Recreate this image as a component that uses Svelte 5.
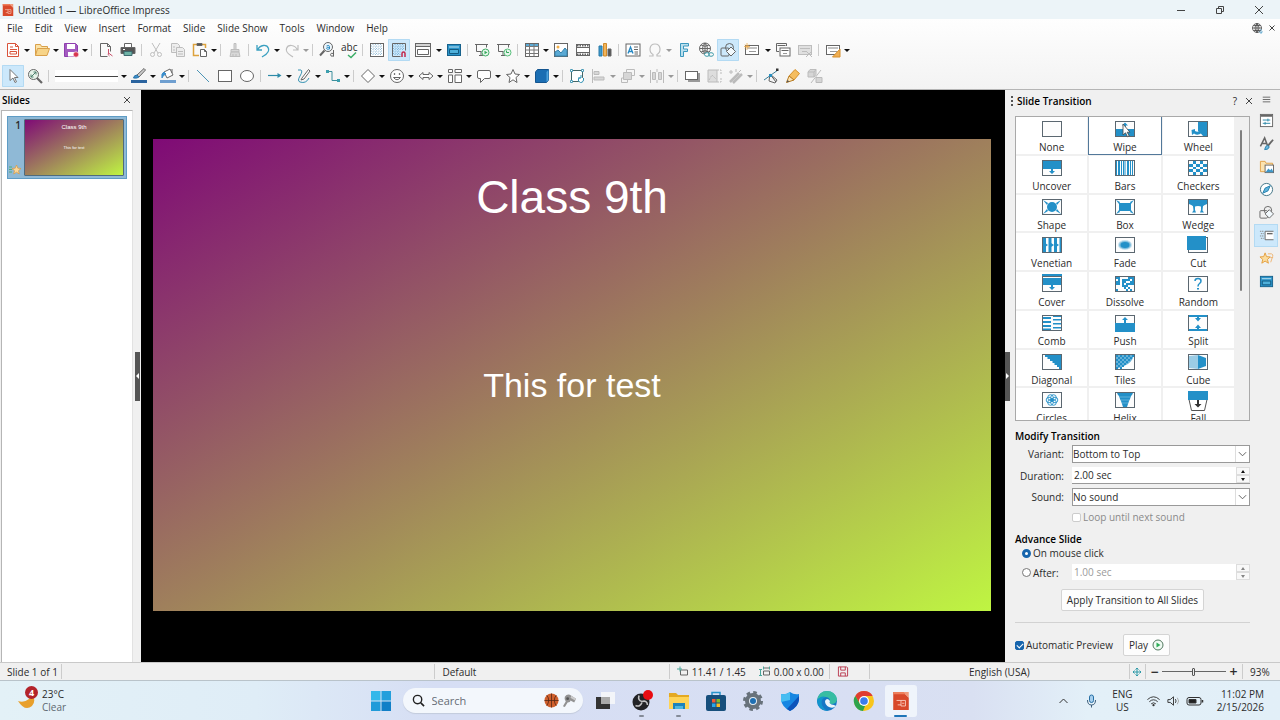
<script>
  // Toolbar entries: [icon, label, flags] where flags may hold
  // m = drop-down arrow, a = active, d = disabled, w = wide
  const standardBar = [
    ['new', 'New', 'm'], ['open', 'Open', 'm'], ['save', 'Save', 'm'], '|',
    ['pdf', 'Export as PDF'], ['print', 'Print'], '|',
    ['cut', 'Cut', 'd'], ['copy', 'Copy', 'd'], ['paste', 'Paste', 'm'], '|',
    ['brush', 'Clone Formatting', 'd'], '|',
    ['undo', 'Undo', 'm'], ['redo', 'Redo', 'md'], '|',
    ['find', 'Find and Replace'], ['spell', 'Spelling'], '|',
    ['grid', 'Display Grid'], ['snap', 'Snap to Grid', 'a'], ['views', 'Display Views', 'mw'],
    ['master', 'Master Slide'], '|',
    ['present', 'Start from First Slide'], ['presentNow', 'Start from Current Slide'], '|',
    ['table', 'Table', 'm'], ['image', 'Insert Image'], ['film', 'Insert Media'], ['chart', 'Insert Chart'], '|',
    ['textbox', 'Insert Text Box'], ['omega', 'Special Characters', 'md'], ['fontwork', 'Fontwork'],
    ['link', 'Hyperlink'], ['shapes', 'Show Draw Functions', 'a'],
    ['newSlide', 'New Slide', 'mw'], ['dupSlide', 'Duplicate Slide'], ['delSlide', 'Delete Slide', 'd'], '|',
    ['layout', 'Slide Layout', 'm']
  ]

  const drawingBar = [
    ['pointer', 'Select', 'a'], ['zoom', 'Zoom & Pan'], '|', 'line',
    ['lineColor', 'Line Color', 'm'], ['fillColor', 'Fill Color', 'm'], '|',
    ['lineTool', 'Insert Line'], ['rect', 'Rectangle'], ['ellipse', 'Ellipse'], '|',
    ['arrow', 'Lines and Arrows', 'm'], ['curve', 'Curves and Polygons', 'm'], ['connector', 'Connectors', 'm'], '|',
    ['diamond', 'Basic Shapes', 'm'], ['smiley', 'Symbol Shapes', 'm'], ['doubleArrow', 'Block Arrows', 'm'],
    ['flow', 'Flowchart', 'm'], ['callout', 'Callouts', 'm'], ['star', 'Stars and Banners', 'm'],
    ['cube', '3D Objects', 'm'], '|',
    ['rotate', 'Rotate'], ['align', 'Align', 'md'], ['arrange', 'Arrange', 'md'], ['distribute', 'Distribute', 'md'], '|',
    ['shadow', 'Shadow'], ['crop', 'Crop', 'd'], ['filter', 'Filter', 'md'], '|',
    ['points', 'Edit Points'], ['glue', 'Gluepoints'], ['extrude', 'Toggle Extrusion', 'd']
  ]

  const monitor = '<path d="M1 2.500h13M2.500 2.500v7h5M12.500 2.500v3M5 13.500h4M7 9.500v4"/>'
  const winIcon = '<rect x="1.500" y="3.500" width="13" height="9" fill="#fff"/><path d="M3 6h10" stroke="#888"/><path d="M5 9.500h7" stroke="#999"/>'

  const icons = {
    new: '<path d="M2.500 1.500h8l3 3v10h-11z" fill="#fff" stroke="#d9533a"/><path d="M10.500 1.500v3h3" stroke="#d9533a"/><path d="M5 5h3M5 7.500h7M5 12h6.500V9.500H5z" stroke="#d9533a"/>',
    open: '<path d="M1.500 13.500v-11h5l1 2h6v2" fill="#fbe3a7" stroke="#d9a04a"/><path d="M1.500 13.500l2-7h12l-2.500 7z" fill="#f7d488" stroke="#d9a04a"/>',
    save: '<path d="M1.500 1.500h11l2 2v11h-13z" fill="#a35bc0" stroke="#8e3eae"/><path d="M4 2h8v5H4zM5 10h6v4.500H5z" fill="#fff" stroke="none"/><circle cx="13" cy="12.500" r="2.700" fill="#d83650" stroke="#fff" stroke-width=".6"/>',
    pdf: '<path d="M9.500 14.500h-7v-13h7l3 3v5M9.500 1.500v3h3"/><path d="M10.500 7v4c-1 2 1 3 1 3M10.500 11l4 3" stroke="#c9506b"/>',
    print: '<path d="M4.500 5v-3.500h7V5" fill="#fff"/><path d="M1 5.500h14v6H1z" fill="#555"/><path d="M4 9.500h8v4H4z" fill="#6fb3a6" stroke="#3d6b70"/><path d="M3 7.500h2" stroke="#fff"/>',
    cut: '<path d="M4 1l6 10M12 1L6 11"/><circle cx="4.500" cy="12.500" r="2"/><circle cx="11.500" cy="12.500" r="2"/>',
    copy: '<path d="M1.500 1.500h6l2 2v7h-8z" fill="#ddd"/><path d="M6.500 5.500h6l2 2v7h-8z" fill="#ddd"/><path d="M8 9.500h5M8 12h5M3 5h2M3 8h2"/>',
    paste: '<path d="M5 2.500H1.500v11H7M10 2.500h3.500V6" stroke="#dda23c" stroke-width="1.500"/><path d="M5 1.500h5v2H5z" fill="#555"/><path d="M8.500 7.500h4l2 2v5h-6z" fill="#fff"/><path d="M12.500 7.500v2h2"/>',
    brush: '<path d="M7 1.500h2v6H7zM4 7.500h8v2.500H4z" fill="#aaa"/><path d="M4 10l-1 4.500h10L12 10zM6 12v2M9 12v2" fill="#aaa"/>',
    undo: '<path d="M2 3v5h5M2.500 8C5 2.500 12 2 13.500 6.500S10 13 7 15" stroke="#3aa0c0" stroke-width="1.300"/>',
    redo: '<path d="M14 3v5H9M13.500 8C11 2.500 4 2 2.500 6.500S6 13 9 15" stroke-width="1.200"/>',
    find: '<circle cx="9" cy="5" r="4.500" fill="#eef6fb"/><path d="M5.500 8.500L1 13.500" stroke-width="2"/><path d="M7.500 4q3-1.500 3 .5v2.500q-3 .8-3-.7t3-1" stroke="#2a8cc4"/><path d="M14.500 8v6.500M14.500 11.500q-3-1-3 1.200t3 1.300"/>',
    grid: '<rect x="1.500" y="1.500" width="13" height="13" fill="#fff"/><path d="M4 2v12M6.500 2v12M9 2v12M11.500 2v12M2 4h12M2 6.500h12M2 9h12M2 11.500h12" stroke="#6aa5c9" stroke-width=".7" stroke-dasharray="1 1.500"/>',
    snap: '<path d="M9.500 14.500h-8v-13h13v7"/><path d="M4 2v12M6.500 2v12M9 2v12M11.500 2v6M2 4h12M2 6.500h12M2 9h7M2 11.500h7" stroke="#5a9cc9" stroke-width=".7" stroke-dasharray="1 1.500"/><path d="M11 15v-3.500q0-1.500 1.500-1.500t1.500 1.500V15" stroke="#c2294c" stroke-width="1.500"/>',
    views: '<rect x=".5" y="1.500" width="15" height="13" fill="#fff"/><path d="M.5 4.500h15M2.500 7.500h11v5h-11z"/><path d="M1 3h14" stroke="#aaa"/>',
    master: '<rect x="1.500" y="2.500" width="13" height="11" fill="#2a93c9" stroke="#17618b"/><path d="M3.500 7.500h9v4h-9z" fill="#4fb0da" stroke="#125a80"/><path d="M3 5h10" stroke="#bfe3f2"/>',
    present: monitor + '<circle cx="11.500" cy="10.500" r="3.500" fill="#e8f8ee" stroke="#42ad66"/><path d="M10.500 8.800v3.400l3-1.700z" fill="#35a85a" stroke="none"/>',
    presentNow: monitor + '<circle cx="11.500" cy="10.500" r="3.500" fill="#e8f8ee" stroke="#5abf7c"/><path d="M10.500 8.500v2h2.500" stroke="#35a85a"/>',
    table: '<rect x="1.500" y="1.500" width="13" height="13" fill="#fff"/><path d="M2 3h12" stroke="#5cabd6" stroke-width="2"/><path d="M1.500 4.500h13M1.500 8h13M1.500 11.500h13M5.500 2v12.500M10 2v12.500" stroke="#777"/>',
    image: '<rect x="1.500" y="1.500" width="13" height="13" fill="#fff"/><path d="M2 14v-4l3-2 3 3 4-5 2 2.500V14z" fill="#5aa9d4" stroke="#3382ad"/><circle cx="5" cy="5" r="1.500" fill="#f2b04a" stroke="none"/>',
    film: '<rect x="1.500" y="2.500" width="13" height="11" fill="#fff"/><path d="M2 3.500h12M2 12.500h12" stroke-width="2" stroke-dasharray="1.500 1"/><path d="M2 5.500h12M2 10.500h12"/>',
    chart: '<path d="M2 4h3v10H2z" fill="#3c9bd0" stroke="#2878a5"/><path d="M6.500 1.500h3v12.500h-3z" fill="#f2b45a" stroke="#d18b2b"/><path d="M11 7h3v7h-3z" fill="#555"/>',
    textbox: '<rect x="1" y="2" width="14" height="12" fill="#fff"/><path d="M3 11.500L5.500 5 8 11.500M4 9.500h3" stroke="#2588c4" stroke-width="1.300"/><path d="M9 5h4M9 7.500h4M9.500 10h3.500M9.500 12h3.500"/>',
    omega: '<path d="M2 14h4v-1.500C1.500 10 2 2 8 2s6.500 8 2 10.500V14h4" stroke-width="1.200"/>',
    fontwork: '<path d="M4.500 14.500v-13h8v2.500H7.500v3h4v2.500h-4v5z" fill="#bce0ee" stroke="#3b97bd"/>',
    link: '<circle cx="7" cy="6.500" r="5.500"/><path d="M1.500 6.500h11M7 1v11M3 3q4 2.500 8 0M3 10q4-2.500 8 0M7 1Q2 6.500 7 12M7 1q5 5.500 0 11"/><ellipse cx="9" cy="12.500" rx="2.500" ry="1.800" stroke="#3d9aa8" fill="#fff"/><ellipse cx="13" cy="12.500" rx="2.500" ry="1.800" stroke="#3d9aa8"/>',
    shapes: '<rect x="1" y="6" width="8" height="8" rx="1"/><circle cx="9.500" cy="5.500" r="4"/><path d="M11 5l4.500 4.500L11 14 6.500 9.500z" fill="#f2f9fd"/>',
    newSlide: winIcon + '<path d="M3 1v7M0 4.500h6M1 2.500l4 4M5 2.500l-4 4" stroke="#efac4d" stroke-width=".8"/>',
    dupSlide: '<path d="M4 9.500H1.500v-8h10V4"/><path d="M2.500 3.500h8"/><rect x="5" y="6" width="10" height="8" fill="#fff"/><path d="M6.500 8.500h7"/><path d="M8 11.500h4" stroke="#999"/>',
    delSlide: '<rect x="1.500" y="3.500" width="13" height="9" fill="#bbb"/><path d="M3 6.500h10M5 9.500h5"/><path d="M9 9l6 6M15 9l-6 6"/>',
    layout: winIcon + '<path d="M15 7v8H7.500z" fill="#f0ae52" stroke="#d6902f"/>',
    pointer: '<path d="M5 1.500v11l3-2.500 2 4.500 1.500-.7-2-4.300h3.500z" fill="#fff" stroke="#777"/>',
    zoom: '<circle cx="6.500" cy="6.500" r="5" fill="#e7f3ea"/><path d="M10 10l5 5" stroke-width="2.200"/><path d="M4 9l5-5M4 6.500V9h2.500M9 6.500V4H6.500" stroke="#4c7e6c"/>',
    lineColor: '<path d="M6 7l7-6.500L14.500 2 8 9" fill="#ccc"/><path d="M6 7q-3 0-3.500 3 4 .5 5.500-1z" fill="#3d8ecb" stroke="#2b74a8"/><path d="M0 13.500h16" stroke="#2b649f" stroke-width="3"/>',
    fillColor: '<path d="M4 4l6-3 3 6-6 3z" fill="#fff"/><path d="M4 4q-3 1-2 6 1-3 4-4z" fill="#3d8ecb" stroke="#3d8ecb"/><path d="M12 1v4"/><path d="M0 13.500h16" stroke="#6f9fd0" stroke-width="3"/>',
    lineTool: '<path d="M2 2l12 12" stroke="#4b94b5"/>',
    rect: '<rect x="1.500" y="2.500" width="13" height="11" fill="#fff"/>',
    ellipse: '<ellipse cx="8" cy="8" rx="6.500" ry="5.500" fill="#fff"/>',
    arrow: '<path d="M1 7.500h12" stroke="#2c8aa8" stroke-width="1.200"/><path d="M10.500 5l4 2.500-4 2.500z" fill="#2c8aa8" stroke="none"/>',
    curve: '<path d="M2 2h3q2 1-1 6t0 6q6 2 9-4" stroke="#3693b3"/><path d="M6 10l6.500-8.500L14 3 8 11l-3 1z" fill="#fff"/>',
    connector: '<path d="M3 3.500h4v9h6" stroke="#3c8f9c"/><path d="M1 2h3v3H1zM12 11h3v3h-3z" fill="#3c9fae" stroke="none"/>',
    diamond: '<path d="M8 1.500L14.500 8 8 14.500 1.500 8z" fill="#fff"/>',
    smiley: '<circle cx="8" cy="8" r="6.500" fill="#fff"/><path d="M4.500 9.500q3.500 4.500 7 0z"/><circle cx="5.500" cy="6" r=".5" fill="#555"/><circle cx="10.500" cy="6" r=".5" fill="#555"/>',
    doubleArrow: '<path d="M1 8l4-3.500v2h6v-2L15 8l-4 3.500v-2H5v2z" fill="#fff"/>',
    flow: '<path d="M1.500 1.500h4v3h-4zM8 1.500h6.500v3H8zM1.500 7h4v7.500h-4zM8 7h6.500v7.500H8z" fill="#fff"/>',
    callout: '<path d="M3 2.500h10q1.500 0 1.500 1.500v5q0 1.500-1.500 1.500H8.500l-4 4v-4H3Q1.500 10.500 1.500 9V4Q1.500 2.500 3 2.500z" fill="#fff"/>',
    star: '<path d="M8 1.500l2 4.500 4.500.5-3.500 3 1 5-4-2.700-4 2.700 1-5-3.500-3L6 6z" fill="#fff"/>',
    cube: '<path d="M1.500 4l2-2.500h11v10.500l-2 2.500h-11z" fill="#1b6eb3" stroke="#14558f"/><path d="M12.500 4l2-2v10l-2 2z" fill="#4da3de" stroke="none"/>',
    rotate: '<rect x="2.500" y="2.500" width="11" height="11" stroke="#466" fill="#fff"/><path d="M1.500 1.500h2v2h-2zM12.500 1.500h2v2h-2zM1.500 12.500h2v2h-2z" fill="#fff" stroke="#4a9cb8"/><path d="M14.500 10q.5 4.500-3 4.500-3-1-2-4l2-1M12 7v3H9" stroke="#2f92b5" fill="#fff"/>',
    align: '<path d="M1.500 1v14"/><path d="M3 3.500h5v3H3zM3 9h10v3H3z" fill="#aaa"/>',
    arrange: '<path d="M6.500 1.500h8v6h-8zM1.500 10h6v4.500h-6z"/><path d="M3.500 4.500h8v7h-8z" fill="#aaa"/>',
    distribute: '<path d="M1.500 2v13M8 1v3M8 12v3M14.500 2v13"/><path d="M3.500 4.500h3v7h-3zM9.500 4.500h3v7h-3z" fill="#aaa"/>',
    shadow: '<path d="M4 13h11V5" stroke="#999" stroke-width="2"/><rect x="1.500" y="3.500" width="12" height="8" fill="#fff"/>',
    crop: '<path d="M2 2h9v12H2z" fill="#bbb"/><path d="M3 12l3-5 4 4M11 2h4v4M15 10v4h-4" stroke-dasharray="2 1"/>',
    filter: '<path d="M2 14l9-9M5 15l9-9" stroke-width="2.500"/><path d="M3 2v4M1 4h4M8 1v3M13 2l-2 2"/>',
    points: '<path d="M1 12L15 2" stroke="#3b7e98"/><path d="M7 6l-1 7 6 2 2-3z"/><path d="M7 6l6 8" stroke="#555"/><path d="M6 6h3v3H6z" fill="#288fc0" stroke="none"/><path d="M13 .5h2.500V3H13z" fill="#333" stroke="none"/>',
    glue: '<path d="M4 8l6-6.500 4.500 4L9 12z" fill="#f5bd5f" stroke="#d6912b"/><path d="M4 8l-2.500 6.500L9 12z" fill="#fce3b3" stroke="#b77b22"/><path d="M1.500 14.500l1-2.500 2 1.500z" fill="#555" stroke="none"/>',
    extrude: '<path d="M1 4l2-2.500h6v5L7 9H1z" fill="#aaa"/><path d="M1 4h6v5M7 4l2-2.500M14 2L4 15"/><path d="M9 9.500h6v5H9z" fill="#aaa"/>',
    // sidebar decks
    burger: '<path d="M4 5.500h8M4 8h8M4 10.500h8"/>',
    properties: '<rect x="1.500" y="1.500" width="13" height="13" fill="#fff"/><path d="M2 3h12" stroke-width="2"/><path d="M4 7.500h8M4 11h8M9.500 6v3M6.500 9.500v3" stroke="#2b88a8"/>',
    styles: '<path d="M1.500 11L6 2l3 8M3 8h5" stroke-width="1.600"/><path d="M15 4L9 11" stroke-width="2"/><path d="M9 10q-2 0-3 4.500 4 .5 5-3z" fill="#6db8de" stroke="#2a83b0"/>',
    gallery: '<path d="M1.500 13.500v-11h5l1 2h7v9z" fill="#fbe3b0" stroke="#e0a149"/><rect x="6.500" y="6.500" width="9" height="8" fill="#fff"/><path d="M7 14l3-4 2 2 1.500-2 2 4z" fill="#3d97c9" stroke="none"/>',
    navigator: '<circle cx="8" cy="8" r="6.500" fill="#fff" stroke="#3e7183"/><path d="M12 4l-2.500 5.500L4 12l2.500-5.500z" fill="#61b4dc" stroke="#2480ad"/>',
    transition: '<path d="M15.500 3.500h-9v9h9" fill="#fff"/><path d="M8.500 6h6" stroke-width="1.500"/><path d="M1 3.500h4M2 6h3M1 8.500h4M2 11h3" stroke="#8a8a8a" stroke-dasharray="1.500 .7"/>',
    animation: '<path d="M6.500 2l1.500 4 4 .3-3 2.700 1 4-3.500-2.200L3 13l1-4L1 6.300l4-.3z" fill="#fbdc9e" stroke="#e39f3e"/><path d="M9.500 3h4q2 1 1 3l-2 6M12 7h3" stroke="#eeb472"/>'
  }

  const decks = ['properties', 'styles', 'gallery', 'navigator', 'shapes', 'transition', 'animation', 'master']

  // Fills every cell of a cols x rows raster for which test() holds
  function cells(cols, rows, test) {
    const w = 18 / cols
    const h = 14 / rows
    let d = ''
    for (let r = 0; r < rows; r++) {
      for (let c = 0; c < cols; c++) {
        if (test(c, r)) d += `M${1 + c * w} ${1 + r * h}h${w}v${h}h${-w}z`
      }
    }
    return `<path shape-rendering="crispEdges" d="${d}"/>`
  }

  const transitions = [
    ['None', ''],
    ['Wipe', '<path d="M1 8h18v7H1zM10 1.500l3 3h-2V8H9V4.500H7z"/><path d="M8 3v11l2.500-2.200 2 4 1.700-.8-2-3.800H15z" fill="#fff" stroke="#444" stroke-width=".8"/>'],
    ['Wheel', '<path d="M10 1h9v14h-4q-2-3-5-5z"/><path d="M3.500 9l3.500-1v2q3 2 6-1l1.500 2q-4 4.500-8.500 1.500L4 14z"/>'],
    ['Uncover', '<path d="M1 1h18v8H1zM9 9h2v2h2l-3 3-3-3h2z"/>'],
    ['Bars', '<path d="M1 1h1v14H1zM3 1h2v14H3zM6 1h1v14H6zM8 1h1.500v14H8zM10.500 1H11v14h-.5zM12 1h2v14h-2zM15 1h1v14h-1zM17 1h1v14h-1z"/>'],
    ['Checkers', cells(5, 5, (c, r) => (c + r) % 2 === 1)],
    ['Shape', '<circle cx="10" cy="8" r="5"/><path d="M1 1l5 3-1 2zM19 1l-5 3 1 2zM1 15l5-3-1-2zM19 15l-5-3 1-2z"/>'],
    ['Box', '<path d="M4 4h12v8H4z"/><path d="M1 1l4 2-1 2zM19 1l-4 2 1 2zM1 15l4-2-1-2zM19 15l-4-2 1-2z"/>'],
    ['Wedge', '<path d="M1 1h18v4q-3 1-5 3-4-2-8 0-2-2-5-3z"/><path d="M5 7h2v4l1 2.500H4l1.500-2zM15 7h-2v4l-1 2.500h4l-1.500-2z"/>'],
    ['Venetian', '<path d="M1 1h3v14H1zM6.500 1h3v14h-3zM12 1h3v14h-3zM17.500 1H19v14h-1.500z"/><path d="M3 6l3 2-3 2zM9 6l3 2-3 2zM14 6l3 2-3 2z"/>'],
    ['Fade', '<ellipse cx="10" cy="8" rx="7" ry="5" opacity=".25"/><ellipse cx="10" cy="8" rx="6" ry="4" opacity=".45"/><ellipse cx="10" cy="8" rx="4.500" ry="3"/>'],
    ['Cut', '<path d="M-1-1h19v14H-1z"/>'],
    ['Cover', '<path d="M0-2h20v2H0zM1 2h18v7H1zM9 9h2v2h2l-3 3-3-3h2z"/>'],
    ['Dissolve', cells(9, 7, (c, r) => (c * c * 3 + r * 5 + c * r) % 7 < 4)],
    ['Random', '<path d="M7 5q0-2.500 3-2.500t3 2.500q0 1.500-1.500 2.500T10 10.500" fill="none" stroke="#2390c8" stroke-width="1.500"/><path d="M9 12h2v1.500H9z"/>'],
    ['Comb', '<path d="M1 2h8v2H1zM1 6h8v2H1zM1 10h8v2H1zM1 13.500h8V15H1zM11 1h8v1h-8zM11 4h8v1.500h-8zM11 8h8v1.500h-8zM11 12h8v1.500h-8z"/>'],
    ['Push', '<path d="M0 8h20v9H0zM10 2l3 3h-2v3H9V5H7z"/>'],
    ['Split', '<path d="M1 0h18v2H1zM1 14h18v2H1zM9 2h2v1h2l-3 3.500L7 3h2zM9 14h2v-1h2l-3-3.500L7 13h2z"/>'],
    ['Diagonal', '<path d="M3 1h16v14h-2v-2h-2v-2h-2.500V9h-2V7H8V5H5.500V3H3z"/>'],
    ['Tiles', '<path d="M1 1h18q-2 8-10 11l-8 3z" opacity=".7"/>' + cells(9, 7, (c, r) => (c + r) % 2 === 0 && c + r < 9)],
    ['Cube', '<path d="M1 2l9-1v14l-9-1z" opacity=".45"/><path d="M10 1l8 3v8l-8 3z"/>'],
    ['Circles', '<g fill="none" stroke="#2390c8" stroke-width=".9"><circle cx="10" cy="8" r="1.500"/><circle cx="7" cy="8" r="2.800"/><circle cx="13" cy="8" r="2.800"/><circle cx="8.500" cy="5.500" r="2.800"/><circle cx="11.500" cy="5.500" r="2.800"/><circle cx="8.500" cy="10.500" r="2.800"/><circle cx="11.500" cy="10.500" r="2.800"/></g>'],
    ['Helix', '<path d="M2 1h16l-1 2-1 1-1 3-1 2-1 3-1 3H8l-1-3-1-3-1-2-1-3-1-1z"/><path d="M5 5h10M6 8h8M7 11h6" stroke="#8cc7e4" stroke-width=".6"/>'],
    ['Fall', '']
  ]

  const menus = ['File', 'Edit', 'View', 'Insert', 'Format', 'Slide', 'Slide Show', 'Tools', 'Window', 'Help']

  let selected = $state('Wipe')
  let variant = $state('Bottom to Top')
  let sound = $state('No sound')
  let duration = $state('2.00 sec')
  let after = $state('1.00 sec')
  let advance = $state('click')
  let zoom = $state(50)
</script>

{#snippet icon(name)}
  <svg class="icon" viewBox="0 0 16 16" aria-hidden="true">{@html icons[name]}</svg>
{/snippet}

{#snippet appIcon()}
  <svg viewBox="0 0 16 18" aria-hidden="true">
    <path d="M1 1h9l5 5v11H1z" fill="#d8492b" />
    <path d="M10 1l5 5V1z" fill="#f09a7c" />
    <path d="M1 1h9l2 2H1z" fill="#ee7f5c" />
    <path d="M4 8.500h4M5 12.500h3M8 8.500h4v5H8zM9 11h2" fill="none" stroke="#fbd0c2" stroke-width=".8" />
  </svg>
{/snippet}

{#snippet toolbar(items, label)}
  <div class="toolbar" role="toolbar" aria-label={label}>
    {#each items as item}
      {#if item === '|'}
        <span class="sep"></span>
      {:else if item === 'line'}
        <button class="tool line-style" aria-label="Line Style"><span class="line-sample"></span><i class="caret"></i></button>
      {:else}
        {@const flags = item[2] ?? ''}
        <button
          class="tool"
          class:menu={flags.includes('m')}
          class:active={flags.includes('a')}
          class:wide={flags.includes('w')}
          disabled={flags.includes('d')}
          aria-label={item[1]}
        >
          {#if item[0] === 'spell'}
            <span class="abc">abc<svg viewBox="0 0 10 6"><path d="M1 3l3 2.500L9 .5" fill="none" stroke="#3cae68" stroke-width="1.500" /></svg></span>
          {:else}
            {@render icon(item[0])}
          {/if}
          {#if flags.includes('m')}<i class="caret"></i>{/if}
        </button>
      {/if}
    {/each}
  </div>
{/snippet}

<div class="app">
  <header class="titlebar">
    <span class="app-logo">{@render appIcon()}</span>
    <span class="title">Untitled 1 — LibreOffice Impress</span>
    <button aria-label="Minimize"><svg viewBox="0 0 10 10"><path d="M1 5.500h8" /></svg></button>
    <button aria-label="Restore"><svg viewBox="0 0 10 10"><path d="M1.500 3.500h5v5h-5zM3.500 3V1.500h5v5H7" /></svg></button>
    <button aria-label="Close"><svg viewBox="0 0 10 10"><path d="M1 1l8 8M9 1L1 9" /></svg></button>
  </header>

  <div class="bars">
    <nav class="menubar">
      {#each menus as menu}
        <button>{menu}</button>
      {/each}
      <span class="doc-buttons">
        <svg class="globe" viewBox="0 0 12 12"><circle cx="6" cy="6" r="4.500" /><path d="M1.500 6h9M6 1.500v9M6 1.500q-4 4.500 0 9M6 1.500q4 4.500 0 9M2.500 3.500h7M2.500 8.500h7" /><path d="M10 7v4M8 9.500l2 2 1.500-2" stroke="#4a9bc6" /></svg>
        <button aria-label="Close Document"><svg viewBox="0 0 10 10"><path d="M2.500 2.500l5 5M7.500 2.500l-5 5" /></svg></button>
      </span>
    </nav>
    {@render toolbar(standardBar, 'Standard')}
    {@render toolbar(drawingBar, 'Drawing')}
  </div>

  <main class="workspace">
    <aside class="slides">
      <div class="pane-title">
        <h2>Slides</h2>
        <button aria-label="Close Pane"><svg viewBox="0 0 10 10"><path d="M2 2l6 6M8 2l-6 6" /></svg></button>
      </div>
      <div class="slide-list">
        <button class="thumb" aria-label="Slide 1">
          <span class="thumb-side">
            <b>1</b>
            <svg viewBox="0 0 12 10"><path d="M0 2h3M0 4.500h3M0 7h3" stroke="#4fae7c" /><path d="M7.500 0l1.300 3.200 3.200.3-2.500 2.200.8 3.300-2.800-1.800L4.700 9l.8-3.300L3 3.500l3.200-.3z" fill="#fbd79a" stroke="#d99a41" stroke-width=".7" /></svg>
          </span>
          <span class="mini slide-fill">
            <span class="mini-title">Class 9th</span>
            <span class="mini-body">This for test</span>
          </span>
        </button>
      </div>
    </aside>
    <div class="splitter"><button class="grip" aria-label="Hide Slides"><svg viewBox="0 0 5 6"><path d="M4 0v6L1 3z" /></svg></button></div>

    <section class="canvas">
      <div class="slide slide-fill">
        <h1>Class 9th</h1>
        <p>This for test</p>
      </div>
    </section>

    <div class="splitter"><button class="grip" aria-label="Hide Sidebar"><svg viewBox="0 0 5 6"><path d="M1 0v6l3-3z" /></svg></button></div>
    <aside class="sidebar">
      <div class="panel">
        <div class="panel-title">
          <span class="handle"></span>
          <h2>Slide Transition</h2>
          <button aria-label="Help">?</button>
          <button aria-label="Close Sidebar Deck"><svg viewBox="0 0 10 10"><path d="M2 2l6 6M8 2l-6 6" /></svg></button>
        </div>

        <div class="transitions">
          <div class="transition-grid">
            {#each transitions as [name, art]}
              <button class="transition" class:selected={selected === name} onclick={() => (selected = name)}>
                <svg viewBox="0 0 20 16" aria-hidden="true">
                  {#if name === 'Fall'}
                    <path d="M1 7.500h18l-2.500 11h-13z" fill="#fff" stroke="#555" />
                    <path d="M0-1h20v9H0z" />
                    <path d="M9 8h2v4h2.500L10 15.500 6.500 12H9z" fill="#333" />
                  {:else}
                    <rect x=".5" y=".5" width="19" height="15" fill="#fdfdfd" stroke="#5b6770" />
                    {@html art}
                  {/if}
                </svg>
                <span>{name}</span>
              </button>
            {/each}
          </div>
          <div class="scrollbar"><span></span></div>
        </div>

        <h3>Modify Transition</h3>
        <div class="form">
          <label for="variant">Variant:</label>
          <div class="select">
            <select id="variant" bind:value={variant}>
              <option>Bottom to Top</option>
              <option>Top to Bottom</option>
            </select>
            <svg viewBox="0 0 10 10"><path d="M1 3l4 4 4-4" /></svg>
          </div>
          <label for="duration">Duration:</label>
          <div class="spin">
            <input id="duration" type="text" bind:value={duration} />
            <span class="steps"><button aria-label="Increase"><i class="up"></i></button><button aria-label="Decrease"><i class="down"></i></button></span>
          </div>
          <label for="sound">Sound:</label>
          <div class="select">
            <select id="sound" bind:value={sound}>
              <option>No sound</option>
              <option>Other sound...</option>
            </select>
            <svg viewBox="0 0 10 10"><path d="M1 3l4 4 4-4" /></svg>
          </div>
          <label class="check loop"><input type="checkbox" disabled />Loop until next sound</label>
        </div>

        <h3>Advance Slide</h3>
        <div class="advance">
          <label class="check"><input type="radio" name="advance" value="click" bind:group={advance} />On mouse click</label>
          <div class="after">
            <label class="check"><input type="radio" name="advance" value="after" bind:group={advance} />After:</label>
            <div class="spin off">
              <input type="text" aria-label="After" bind:value={after} disabled={advance !== 'after'} />
              <span class="steps"><button aria-label="Increase" disabled><i class="up"></i></button><button aria-label="Decrease" disabled><i class="down"></i></button></span>
            </div>
          </div>
        </div>
        <button class="push apply">Apply Transition to All Slides</button>
        <hr />
        <div class="preview">
          <label class="check"><input type="checkbox" checked />Automatic Preview</label>
          <button class="push">Play <svg viewBox="0 0 12 12"><circle cx="6" cy="6" r="5" fill="#f1fbf4" stroke="#52795f" /><path d="M4.500 3.500v5L8.500 6z" fill="#2fae58" stroke="none" /></svg></button>
        </div>
      </div>
      <nav class="decks">
        <button aria-label="Sidebar Settings" class="burger">{@render icon('burger')}</button>
        {#each decks as deck}
          <button aria-label={deck} class:active={deck === 'transition'}>{@render icon(deck)}</button>
        {/each}
      </nav>
    </aside>
  </main>

  <footer class="status">
    <span>Slide 1 of 1</span>
    <span></span>
    <span>Default</span>
    <span class="coords">
      <svg viewBox="0 0 12 10"><path d="M3.500 3.500h7v5h-7z" /><path d="M3 0v5M0 2.500h5" stroke="#4aa79c" /></svg>
      <span>11.41 / 1.45</span>
      <svg class="second" viewBox="0 0 12 10"><path d="M4.500 4.500h6v4h-6zM4.500 1.500h6" /><path d="M1.500 3v6M0 3h3M0 9h3M4.500 0v3M10.500 0v3" stroke="#4aa79c" /></svg>
      <span>0.00 x 0.00</span>
    </span>
    <span class="modified"><svg viewBox="0 0 12 12"><path d="M1 1h9l1 1v9H1zM3.500 1v3.500h5V1M3.500 11V7.500h5V11" stroke="#b8354a" /></svg></span>
    <span class="lang">English (USA)</span>
    <span class="fit"><svg viewBox="0 0 10 10"><path d="M5 1v8M1 5h8M3.500 2.500L5 1l1.500 1.500M3.500 7.500L5 9l1.500-1.500M2.500 3.500L1 5l1.500 1.500M7.500 3.500L9 5 7.500 6.500" stroke="#2f9aa8" /></svg></span>
    <span class="zoomer"><button aria-label="Zoom Out">−</button><input type="range" aria-label="Zoom" bind:value={zoom} /><button aria-label="Zoom In">+</button></span>
    <span class="percent">93%</span>
  </footer>

  <div class="taskbar">
    <button class="weather">
      <span class="moon">
        <svg viewBox="0 0 20 20"><path d="M1 10q6 2 11-2 3-3 2-6 6 7 1 13-7 6-14-5z" fill="#e8a02c" /></svg>
        <b>4</b>
      </span>
      <span class="two-line"><span>23°C</span><small>Clear</small></span>
    </button>

    <div class="pins">
      <button aria-label="Start"><svg viewBox="0 0 20 20"><path d="M0 0h9.500v9.500H0z" fill="#35b8ea" /><path d="M10.500 0H20v9.500h-9.500z" fill="#239fdc" /><path d="M0 10.500h9.500V20H0z" fill="#209bd9" /><path d="M10.500 10.500H20V20h-9.500z" fill="#117fc7" /></svg></button>
      <label class="search">
        <svg viewBox="0 0 14 14"><circle cx="6" cy="6" r="4.500" fill="none" stroke="#222" stroke-width="1.500" /><path d="M9.500 9.500L13 13" stroke="#222" stroke-width="1.700" /></svg>
        <input type="text" placeholder="Search" aria-label="Search" />
        <svg class="ball" viewBox="0 0 16 16"><circle cx="8" cy="8" r="7.500" fill="#cf5f2d" /><path d="M8 .5v15M.5 8h15M3 2.500q4 5 0 11M13 2.500q-4 5 0 11" fill="none" stroke="#4d2416" stroke-width=".8" /></svg>
        <svg class="ball" viewBox="0 0 16 16"><path d="M3 4q3-4 7-1l5 3-2 4-4-2q0 2-3 2l-3 5-2-1 3-5q-2-2-1-5z" fill="#929292" /><path d="M10 3l5 3-1 2-5-3z" fill="#ccc" /><circle cx="6" cy="6" r="1.500" fill="#555" /></svg>
      </label>
      <button aria-label="Task View"><svg viewBox="0 0 20 20"><path d="M1 6h14v12H1z" fill="#333" /><path d="M6 1h14v12H6z" fill="#fafafa" opacity=".8" /><path d="M6 6h9v7H6z" fill="#aaa" /></svg></button>
      <button class="running" aria-label="OBS Studio"><svg viewBox="0 0 20 20"><circle cx="9" cy="11" r="8.500" fill="#222326" /><g fill="none" stroke="#c4c4c4" stroke-width="1.600"><path d="M7 4.500q-1.500 5 3 6" /><path d="M3.500 14.500q4.500 2 6.500-3" /><path d="M15.500 14q-.5-5-5.500-3.500" /></g><circle cx="16" cy="4" r="5" fill="#e80c12" /></svg></button>
      <button class="running" aria-label="File Explorer"><svg viewBox="0 0 20 20"><path d="M0 2h7l2 2h11v13H0z" fill="#e4a923" /><path d="M0 6h20v12H0z" fill="#ffd457" /><path d="M4 12h12v6H4z" fill="#1d83bb" /><path d="M6 15h8v3H6z" fill="#4db6df" /></svg></button>
      <button aria-label="Microsoft Store"><svg viewBox="0 0 20 20"><path d="M6 5V1.500h8V5" fill="none" stroke="#2794cc" stroke-width="1.500" /><rect x="0" y="4" width="20" height="16" rx="2" fill="#174f7c" /><path d="M6 8h3.500v3.500H6z" fill="#f25a34" /><path d="M10.500 8H14v3.500h-3.500z" fill="#80bc2c" /><path d="M6 12.500h3.500V16H6z" fill="#29a6e8" /><path d="M10.500 12.500H14V16h-3.500z" fill="#fbba22" /></svg></button>
      <button aria-label="Settings"><svg viewBox="0 0 20 20"><circle cx="10" cy="10" r="8.500" fill="none" stroke="#68727b" stroke-width="3" stroke-dasharray="3.500 3.170" /><circle cx="10" cy="10" r="6" fill="#e5edf4" stroke="#68727b" stroke-width="4" /><circle cx="10" cy="10" r="3" fill="#1f6fb2" /></svg></button>
      <button aria-label="Defender"><svg viewBox="0 0 20 20"><path d="M10 1q4 3 9 2v6q-1 7-9 11-8-4-9-11V3q5 1 9-2z" fill="#1686e2" /><path d="M10 1v8L1 11V3q5 1 9-2z" fill="#47bdf2" /><path d="M19 5v4q-1 7-9 11l-3-2z" fill="#0c53ba" /></svg></button>
      <button aria-label="Microsoft Edge"><svg viewBox="0 0 20 20"><circle cx="10" cy="10" r="10" fill="#1677c5" /><path d="M0 9Q2 0 10 0t10 8q0 5-6 5-3-1-1-3 0-4-5-4-5 0-8 3z" fill="#37bda3" /><path d="M0 9q4-5 9-3-6 2-4 8 2 5 7 6Q1 20 0 9z" fill="#1295cd" /><path d="M8 10q2-4 5 0-2 3 4 4l2 1q-3 3-7 1-4-2-4-6z" fill="#eaf5fb" /></svg></button>
      <button aria-label="Google Chrome"><svg viewBox="0 0 20 20"><circle cx="10" cy="10" r="10" fill="#f8c51c" /><path d="M1.300 5Q4 0 10 0t8.700 5H10L6 13z" fill="#df3c30" /><path d="M1.300 5L6 13l5 2-2 5Q3 19.500.7 14T1.300 5z" fill="#2da34d" /><circle cx="10" cy="10" r="5" fill="#fff" /><circle cx="10" cy="10" r="3.800" fill="#3b7ded" /></svg></button>
      <button class="running current" aria-label="LibreOffice Impress">{@render appIcon()}</button>
    </div>

    <div class="tray">
      <svg class="chevron" viewBox="0 0 12 12"><path d="M2 8l4-4 4 4" /></svg>
      <svg class="mic" viewBox="0 0 12 14"><rect x="4" y="1" width="4" height="7.500" rx="2" fill="#a6cfee" stroke="#2870a5" /><path d="M2 6q0 5 4 5t4-5M6 11v2.500" stroke="#3b5d7a" /></svg>
      <span class="two-line center"><span>ENG</span><span>US</span></span>
      <span class="tray-icons">
        <svg viewBox="0 0 16 12"><path d="M1.500 4.500q6.500-6 13 0M3.500 6.800q4.500-4.200 9 0M5.500 9q2.500-2.200 5 0" /><circle cx="8" cy="10.500" r="1.200" fill="#333" stroke="none" /></svg>
        <svg viewBox="0 0 16 12"><path d="M2 4.500h2.500L8 1.500v9L4.500 7.500H2zM10 4q1.500 2 0 4" /><path d="M12 2.500q3 3.500 0 7" stroke="#aaa" /></svg>
        <svg viewBox="0 0 18 12"><rect x="1" y="2.500" width="14" height="7.500" rx="2" /><path d="M3 4.500h7v3.500H3z" fill="#222" /><path d="M16.500 5v2.500" stroke-width="1.500" /></svg>
      </span>
      <span class="two-line end"><span>11:02 PM</span><span>2/15/2026</span></span>
    </div>
  </div>
</div>

<style>
  :global(body) {
    background: #f0f0f0;
  }

  .app {
    display: flex;
    flex-direction: column;
    min-height: 100vh;
    font-family: 'Open Sans', 'Noto Sans', sans-serif;
    font-size: 10px;
    line-height: 14px;
    color: #2b2b2b;
  }

  .app * {
    box-sizing: border-box;
  }

  button,
  input,
  select {
    margin: 0;
    padding: 0;
    border: 0;
    background: none;
    font: inherit;
    color: inherit;
  }

  h1, h2, h3, p {
    margin: 0;
  }

  h2, h3 {
    font-size: 10px;
    font-weight: 600;
    color: #000;
  }

  svg {
    display: block;
    flex: none;
    overflow: visible;
  }

  /* title and menu */
  .titlebar {
    display: flex;
    align-items: center;
    height: 19px;
    padding: 0 2px;
    background: #ecf4f8;
  }

  .app-logo svg {
    width: 12px;
    height: 14px;
  }

  .title {
    flex: 1;
    margin-left: 4px;
  }

  .titlebar button {
    display: grid;
    place-items: center;
    width: 39px;
    height: 19px;
  }

  .titlebar button svg,
  .pane-title svg,
  .panel-title svg,
  .doc-buttons svg {
    width: 10px;
    height: 10px;
    fill: none;
    stroke: #444;
  }

  .bars {
    background: linear-gradient(#fefefe, #f3f3f3);
    border-bottom: 1px solid #b5b5b5;
  }

  .menubar {
    display: flex;
    align-items: center;
    gap: 12px;
    height: 18px;
    padding-left: 7px;
  }

  .doc-buttons {
    display: flex;
    align-items: center;
    gap: 4px;
    margin-left: auto;
    padding-right: 3px;
  }

  .doc-buttons .globe {
    width: 12px;
    height: 12px;
    stroke-width: 0.8;
  }

  /* toolbars */
  .toolbar {
    display: flex;
    align-items: center;
    height: 26px;
    padding-left: 2px;
  }

  .tool {
    display: flex;
    align-items: center;
    flex: none;
    width: 22px;
    height: 22px;
    padding-left: 3px;
    border-radius: 1px;
  }

  .tool.menu {
    width: 29px;
  }

  .tool.wide {
    width: 33px;
    padding-left: 5px;
  }

  .tool.active {
    background: #cce8fb;
    box-shadow: inset 0 0 0 1px #b3daf3;
  }

  .tool:disabled {
    filter: grayscale(1);
    opacity: 0.4;
  }

  .icon {
    width: 16px;
    height: 16px;
    fill: none;
    stroke: #666;
  }

  .caret {
    width: 0;
    margin-left: 3px;
    border: 3px solid transparent;
    border-top: 3px solid #111;
    border-bottom: 0;
  }

  .wide .caret {
    margin-left: 5px;
  }

  .sep {
    flex: none;
    width: 1px;
    height: 12px;
    margin: 0 3px 0 2px;
    background: #ccc;
  }

  .line-style {
    width: 76px;
  }

  .line-sample {
    width: 63px;
    height: 12px;
    background: linear-gradient(#444, #444) center / 100% 1px no-repeat #fff;
  }

  .abc {
    width: 16px;
    line-height: 9px;
  }

  .abc svg {
    width: 10px;
    height: 6px;
    margin-left: 6px;
  }

  /* workspace */
  .workspace {
    display: flex;
    flex: 1;
    background: #f0f0f0;
  }

  .slides {
    display: flex;
    flex-direction: column;
    flex: none;
    width: 135px;
    padding: 0 2px 0 1px;
  }

  .pane-title {
    display: flex;
    align-items: center;
    justify-content: space-between;
    height: 20px;
    padding: 0 1px;
  }

  .slide-list {
    flex: 1;
    padding: 5px;
    background: #fff;
    border: 1px solid #b5b5b5;
    border-bottom: 0;
    border-right-color: #e2e2e2;
  }

  .thumb {
    display: flex;
    width: 100%;
    padding: 2px 2px 2px 0;
    background: #8fb9d6;
    border: 1px solid #5e9cc5;
  }

  .thumb-side {
    display: flex;
    flex-direction: column;
    justify-content: space-between;
    width: 16px;
    padding: 0 3px 1px 1px;
    text-align: right;
    line-height: 12px;
  }

  .thumb-side b {
    font-weight: 600;
  }

  .thumb-side svg {
    width: 12px;
    height: 10px;
  }

  .slide-fill {
    background: linear-gradient(to bottom right, #7f0a76, #bff542);
    font-family: 'Liberation Sans', Arial, sans-serif;
    color: #fff;
    text-align: center;
  }

  .mini {
    display: flex;
    flex-direction: column;
    flex: 1;
    height: 57px;
    border: 1px solid #4f6b7d;
    border-radius: 1px;
  }

  .mini-title {
    margin-top: 3px;
    font-size: 6px;
    line-height: 8px;
  }

  .mini-body {
    margin-top: 13px;
    font-size: 4px;
    line-height: 8px;
  }

  .splitter {
    display: flex;
    align-items: center;
    flex: none;
    width: 5px;
  }

  .slides + .splitter {
    width: 6px;
  }

  .grip {
    width: 5px;
    height: 49px;
    background: #555;
  }

  .grip svg {
    width: 5px;
    height: 6px;
    fill: #fff;
  }

  .canvas {
    display: flex;
    align-items: center;
    flex: 1;
    min-width: 0;
    padding: 0 14px 2px 12px;
    background: #000;
  }

  .slide {
    flex: 1;
    aspect-ratio: 16 / 9;
  }

  .slide h1 {
    margin-top: 32px;
    font-size: 46px;
    font-weight: 400;
    line-height: 52px;
  }

  .slide p {
    margin-top: 142px;
    font-size: 34px;
    line-height: 40px;
  }

  /* sidebar */
  .sidebar {
    display: flex;
    flex: none;
    width: 270px;
  }

  .panel {
    display: flex;
    flex-direction: column;
    flex: 1;
    min-width: 0;
    padding: 0 4px 5px 5px;
  }

  .panel-title {
    display: flex;
    align-items: center;
    height: 22px;
    margin: 0 -6px 4px 0;
  }

  .handle {
    height: 10px;
    margin: 0 4px 0 -4px;
    border-left: 2px dotted #555;
  }

  .panel-title h2 {
    flex: 1;
  }

  .panel-title button {
    width: 14px;
    display: grid;
    place-items: center;
  }

  .transitions {
    display: flex;
    align-items: flex-start;
    height: 305px;
    overflow: hidden;
    border: 1px solid #a9a9a9;
  }

  .transition-grid {
    display: grid;
    grid-template-columns: repeat(3, 1fr);
    grid-template-rows: repeat(8, 1fr);
    gap: 2px;
    flex: 1;
    height: 308px;
  }

  .transition {
    display: flex;
    flex-direction: column;
    align-items: center;
    gap: 4px;
    padding-top: 4px;
    background: #fff;
    line-height: 12px;
  }

  .transition.selected {
    box-shadow: 0 0 0 1px #52789a;
  }

  .transition svg {
    width: 20px;
    height: 16px;
    fill: #2390c8;
  }

  .scrollbar {
    width: 15px;
    padding: 13px 6px;
  }

  .scrollbar span {
    display: block;
    width: 2px;
    height: 161px;
    border-radius: 1px;
    background: #808080;
  }

  .panel h3 {
    margin-top: 8px;
  }

  .form {
    display: grid;
    grid-template-columns: 49px 1fr;
    align-items: center;
    gap: 4px 8px;
    margin-top: 2px;
    text-align: right;
  }

  .select {
    display: flex;
    align-items: center;
    height: 18px;
    background: #fff;
    border: 1px solid #999;
  }

  .select select {
    flex: 1;
    height: 16px;
    margin-right: -14px;
    appearance: none;
    outline: none;
  }

  .select svg {
    width: 14px;
    height: 16px;
    padding: 3px 2px;
    fill: none;
    stroke: #555;
    border-left: 1px solid #ddd;
    pointer-events: none;
  }

  .spin {
    display: flex;
    height: 17px;
    border-bottom: 1px solid #999;
  }

  .spin input {
    flex: 1;
    min-width: 0;
    padding: 0 2px;
    background: #fff;
  }

  .spin.off {
    flex: 1;
    border-bottom-color: #f0f0f0;
    color: #9a9a9a;
  }

  .off i {
    opacity: 0.5;
  }

  .steps {
    display: flex;
    flex-direction: column;
    width: 14px;
  }

  .steps button {
    display: grid;
    place-items: center;
    flex: 1;
    min-height: 0;
    background: #f8f8f8;
    border: 1px solid #ddd;
  }

  .steps i {
    width: 0;
    border: 2px solid transparent;
  }

  .steps .up {
    border-top: 0;
    border-bottom: 3px solid #111;
  }

  .steps .down {
    border-bottom: 0;
    border-top: 3px solid #111;
  }

  .check {
    display: flex;
    align-items: center;
    gap: 2px;
  }

  .check input {
    display: grid;
    place-items: center;
    width: 9px;
    height: 9px;
    appearance: none;
    background: #fff;
    border: 1px solid #777;
    border-radius: 2px;
  }

  .check input[type='radio'] {
    border-radius: 50%;
  }

  .check input[type='radio']:checked {
    border: 3px solid #1765ad;
  }

  .check input[type='checkbox']:checked {
    background: #1765ad;
    border-color: #1765ad;
  }

  .check input[type='checkbox']:checked::after {
    content: '';
    width: 5px;
    height: 3px;
    border: solid #fff;
    border-width: 0 0 1px 1px;
    transform: rotate(-45deg);
  }

  .loop {
    grid-column: 2;
    color: #8a8a8a;
  }

  .loop input {
    border-color: #ccc;
  }

  .advance {
    display: flex;
    flex-direction: column;
    gap: 4px;
    padding-left: 7px;
  }

  .after {
    display: flex;
  }

  .after .check {
    width: 50px;
  }

  .push {
    display: flex;
    align-items: center;
    align-self: center;
    gap: 4px;
    height: 22px;
    padding: 0 5px;
    background: #fdfdfd;
    border: 1px solid #d4d4d4;
    border-radius: 2px;
  }

  .push svg {
    width: 12px;
    height: 12px;
  }

  .apply {
    margin-top: 8px;
  }

  hr {
    width: 100%;
    margin: 11px 0;
    border: 0;
    border-top: 1px solid #d2d2d2;
  }

  .preview {
    display: flex;
    align-items: center;
    gap: 10px;
  }

  .decks {
    display: flex;
    flex-direction: column;
    width: 26px;
  }

  .decks button {
    display: grid;
    place-items: center;
    width: 24px;
    height: 23px;
  }

  .decks .burger {
    height: 19px;
  }

  .decks .active {
    background: #cce8fb;
    box-shadow: inset 0 0 0 1px #b3daf3;
  }

  .decks .icon {
    width: 15px;
    height: 15px;
  }

  /* status bar */
  .status {
    display: grid;
    grid-template-columns: 62px 373fr 234fr 160px 40px 260fr 16px 97px 37px;
    grid-template-rows: 17px;
    background: #f0f0f0;
    border-top: 1px solid #c9c9c9;
    border-bottom: 1px solid #b9c3ca;
  }

  .status > span {
    display: flex;
    align-items: center;
    margin: 1px 0;
    padding-left: 7px;
    border-right: 1px solid #ccc;
  }

  .status > .percent {
    border-right: 0;
  }

  .status svg {
    width: 12px;
    height: 11px;
    fill: none;
    stroke: #666;
  }

  .status .coords {
    gap: 3px;
  }

  .coords .second {
    margin-left: 10px;
  }

  .status .lang {
    justify-content: center;
    padding: 0;
  }

  .status .fit {
    padding: 0 2px;
  }

  .status .fit svg {
    width: 10px;
    height: 10px;
  }

  .status .zoomer {
    gap: 3px;
    padding: 0 4px;
  }

  .zoomer button {
    width: 9px;
    font-size: 14px;
    font-weight: 600;
  }

  .zoomer input {
    flex: 1;
    min-width: 0;
    height: 12px;
    appearance: none;
    background: linear-gradient(#666, #666) center / 100% 1px no-repeat;
  }

  .zoomer input::-webkit-slider-thumb {
    appearance: none;
    width: 3px;
    height: 8px;
    border: 1px solid #555;
    border-radius: 1px;
    background: #eee;
  }

  /* taskbar */
  .taskbar {
    display: grid;
    grid-template-columns: 1fr auto 1fr;
    align-items: center;
    height: 39px;
    padding-left: 6px;
    background: linear-gradient(90deg, #e3f1f7, #dfedf7 20%, #d6def4 34%, #d8dff3 68%, #d9e0f2 76%, #e3f0f8 85%, #e2eff8);
  }

  .weather {
    display: flex;
    align-items: center;
    gap: 5px;
    padding-left: 11px;
    text-align: left;
  }

  .moon {
    position: relative;
    width: 20px;
    height: 30px;
  }

  .moon svg {
    width: 20px;
    height: 20px;
    margin-top: 5px;
  }

  .moon b {
    position: absolute;
    top: 0;
    right: -1px;
    width: 13px;
    height: 13px;
    border-radius: 50%;
    background: #b3232a;
    color: #fff;
    font-size: 9px;
    line-height: 13px;
    text-align: center;
  }

  .two-line {
    display: flex;
    flex-direction: column;
    line-height: 13px;
  }

  .two-line small {
    font-size: 10px;
    color: #5d6870;
  }

  .center {
    align-items: center;
  }

  .end {
    align-items: flex-end;
  }

  .pins {
    display: flex;
    align-items: center;
    gap: 5px;
  }

  .pins button {
    display: grid;
    place-items: center;
    position: relative;
    width: 32px;
    height: 32px;
    border-radius: 3px;
  }

  .pins button svg {
    width: 20px;
    height: 20px;
  }

  .pins button:first-child {
    width: 22px;
  }

  .running::after {
    content: '';
    position: absolute;
    bottom: 0;
    width: 5px;
    height: 2px;
    border-radius: 1px;
    background: #848b98;
  }

  .pins .current {
    background: #eff4fb;
  }

  .current::after {
    width: 13px;
    background: #1e75b8;
  }

  .search {
    display: flex;
    align-items: center;
    gap: 3px;
    width: 180px;
    height: 25px;
    margin: 0 1px 0 6px;
    padding: 0 6px 0 9px;
    border-radius: 13px;
    background: #f3f7fc;
    box-shadow: 0 1px 1px #c3cbdc;
  }

  .search input {
    flex: 1;
    min-width: 0;
    padding-left: 4px;
    font-size: 11px;
  }

  .search input::placeholder {
    color: #666c75;
  }

  .search svg {
    width: 13px;
    height: 13px;
  }

  .search .ball {
    width: 15px;
    height: 15px;
  }

  .tray {
    display: flex;
    align-items: center;
    justify-content: flex-end;
    gap: 13px;
    padding-right: 16px;
  }

  .tray svg {
    width: 15px;
    height: 12px;
    fill: none;
    stroke: #333;
  }

  .tray .mic {
    height: 14px;
  }

  .tray-icons {
    display: flex;
    gap: 5px;
  }

  .tray-icons svg:last-child {
    width: 18px;
  }
</style>
